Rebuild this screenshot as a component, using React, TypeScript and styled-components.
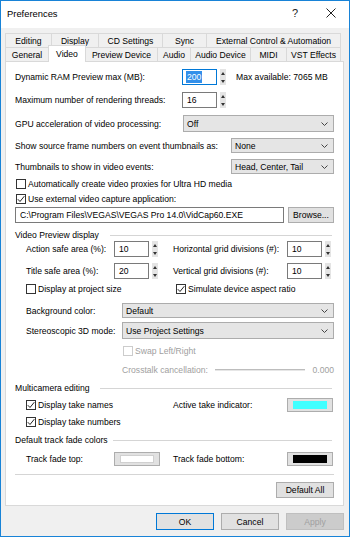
import React from 'react';
import styled, { createGlobalStyle } from 'styled-components';

const GlobalStyle = createGlobalStyle`
  html, body {
    margin: 0;
    padding: 0;
    background: #fff;
  }

  body {
    font-family: "Liberation Sans", Arial, sans-serif;
    font-size: 8.6px;
    color: #000;
  }

  * {
    box-sizing: border-box;
  }
`;

const Window = styled.div`
  width: 350px;
  height: 537px;
  border: 1px solid #1883d7;
  background: #f0f0f0;
  display: flex;
  flex-direction: column;
  overflow: hidden;
`;

const TitleBar = styled.div`
  height: 27px;
  flex-shrink: 0;
  display: flex;
  align-items: center;
  padding: 0 0 3px 6px;
  background: #fff;
  font-size: 9.4px;
`;

const TitleButton = styled.div`
  width: 36px;
  height: 100%;
  display: flex;
  align-items: center;
  justify-content: center;
  font-size: 11px;
  color: #222;

  &:first-of-type {
    margin-left: auto;
  }
`;

const TabArea = styled.div`
  flex-shrink: 0;
  padding: 5px 0 0 4px;
`;

const TabRow = styled.div`
  display: flex;
  height: 14px;
`;

const Tab = styled.div<{ $w: number; $active?: boolean }>`
  width: ${(p) => p.$w}px;
  flex-shrink: 0;
  display: flex;
  align-items: center;
  justify-content: center;
  white-space: nowrap;
  border: 1px solid #d9d9d9;
  border-bottom: none;
  border-right: none;
  background: ${(p) => (p.$active ? '#fff' : '#f0f0f0')};

  &:last-child {
    border-right: 1px solid #d9d9d9;
  }

  ${(p) =>
    p.$active &&
    `
    position: relative;
    z-index: 1;
    height: 17px;
    margin-top: -2px;
    border-right: 1px solid #d9d9d9;
    & + div { border-left: none; }
  `}
`;

const Panel = styled.div`
  flex-shrink: 0;
  height: 445px;
  margin: 0 5px 0 4px;
  padding: 0 9px;
  background: #fff;
  border: 1px solid #d9d9d9;
  display: flex;
  flex-direction: column;
`;

const Row = styled.div<{ $mt: number; $h: number; $indent?: number }>`
  flex-shrink: 0;
  display: flex;
  align-items: center;
  height: ${(p) => p.$h}px;
  margin-top: ${(p) => p.$mt}px;
  padding-left: ${(p) => p.$indent ?? 0}px;
  white-space: nowrap;
`;

const Col = styled.div<{ $w?: number; $pl?: number }>`
  display: flex;
  align-items: center;
  height: 100%;
  ${(p) => (p.$w ? `width: ${p.$w}px; flex-shrink: 0;` : 'flex: 1;')}
  padding-left: ${(p) => p.$pl ?? 0}px;
`;

const Label = styled.span<{ $w?: number; $disabled?: boolean; $ml?: number }>`
  flex-shrink: 0;
  width: ${(p) => (p.$w ? `${p.$w}px` : 'auto')};
  margin-left: ${(p) => p.$ml ?? 0}px;
  color: ${(p) => (p.$disabled ? '#a0a0a0' : '#000')};
`;

const TextBox = styled.div<{ $w?: number; $focused?: boolean }>`
  ${(p) => (p.$w ? `width: ${p.$w}px; flex-shrink: 0;` : 'flex: 1;')}
  height: 100%;
  display: flex;
  align-items: center;
  padding-left: 4px;
  background: #fff;
  border: 1px solid ${(p) => (p.$focused ? '#0078d7' : '#7a7a7a')};
`;

const Selection = styled.span`
  background: #3390ea;
  color: #fff;
  padding: 1px 1px;
  margin-left: -1px;
`;

const Spinner = styled.div`
  width: 6px;
  height: 100%;
  margin-left: 3px;
  display: flex;
  flex-direction: column;
  justify-content: space-around;
  align-items: center;
  background: #e4e4e4;
`;

const Arrow = styled.div<{ $down?: boolean }>`
  width: 0;
  height: 0;
  border-left: 2.5px solid transparent;
  border-right: 2.5px solid transparent;
  ${(p) => (p.$down ? 'border-top' : 'border-bottom')}: 3px solid #333;
`;

const Select = styled.div<{ $w?: number }>`
  ${(p) => (p.$w ? `width: ${p.$w}px; flex-shrink: 0;` : 'flex: 1;')}
  height: 100%;
  display: flex;
  align-items: center;
  justify-content: space-between;
  padding: 0 5px 0 3px;
  background: #e5e5e5;
  border: 1px solid #acacac;
`;

const Box = styled.span<{ $disabled?: boolean }>`
  width: 10px;
  height: 10px;
  flex-shrink: 0;
  margin-right: 2px;
  display: flex;
  align-items: center;
  justify-content: center;
  background: #fff;
  border: 1px solid ${(p) => (p.$disabled ? '#cccccc' : '#333')};
`;

const GroupHeader = styled.div<{ $mt: number; $textW: number }>`
  flex-shrink: 0;
  display: flex;
  align-items: center;
  height: 12px;
  margin-top: ${(p) => p.$mt}px;
  white-space: nowrap;

  & > span {
    width: ${(p) => p.$textW}px;
  }

  &::after {
    content: '';
    flex: 1;
    height: 1px;
    margin-right: 2px;
    background: #d5d5d5;
  }
`;

const Swatch = styled.div`
  width: 46px;
  height: 100%;
  flex-shrink: 0;
  display: flex;
  padding: 2px 5px;
  background: #e1e1e1;
  border: 1px solid #adadad;
`;

const SwatchColor = styled.div<{ $color: string }>`
  flex: 1;
  background: ${(p) => p.$color};
  border: 1px solid ${(p) => (p.$color === '#ffffff' ? '#d0d0d0' : p.$color)};
`;

const SliderTrack = styled.div`
  width: 90px;
  height: 2px;
  flex-shrink: 0;
  background: #bdbdbd;
  border-bottom: 1px solid #e6e6e6;
`;

const Separator = styled.div`
  flex-shrink: 0;
  height: 1px;
  margin-top: 8px;
  background: #d5d5d5;
`;

const Button = styled.button<{ $w?: number; $primary?: boolean }>`
  width: ${(p) => p.$w ?? 58}px;
  height: 100%;
  padding: 0;
  font: inherit;
  color: #000;
  background: #e1e1e1;
  border: 1px solid ${(p) => (p.$primary ? '#0078d7' : '#adadad')};

  &:disabled {
    color: #a0a0a0;
    background: #cccccc;
    border-color: #bfbfbf;
  }
`;

const Footer = styled.div`
  flex-shrink: 0;
  height: 24px;
  display: flex;
  justify-content: flex-end;
  gap: 7px;
  padding: 7px 5px 0 0;
`;

const ButtonRow = styled.div`
  display: flex;
  height: 17px;
  gap: 7px;
`;

const Chevron = () => (
  <svg width="7" height="4" viewBox="0 0 7 4">
    <polyline points="0.5,0.5 3.5,3.5 6.5,0.5" fill="none" stroke="#444" strokeWidth="1" />
  </svg>
);

const Check = () => (
  <svg width="8" height="8" viewBox="0 0 8 8">
    <polyline points="0.8,4.2 3,6.5 7.3,1.2" fill="none" stroke="#222" strokeWidth="1" />
  </svg>
);

type CheckProps = { label: string; checked?: boolean; disabled?: boolean };

const CheckBox: React.FC<CheckProps> = ({ label, checked, disabled }: CheckProps) => (
  <>
    <Box $disabled={disabled}>{checked && <Check />}</Box>
    <Label $disabled={disabled}>{label}</Label>
  </>
);

type SpinProps = { value: React.ReactNode; focused?: boolean };

const SpinBox: React.FC<SpinProps> = ({ value, focused }: SpinProps) => (
  <>
    <TextBox $w={35} $focused={focused}>{value}</TextBox>
    <Spinner>
      <Arrow />
      <Arrow $down />
    </Spinner>
  </>
);

const tabsBack = [
  { name: 'Editing', w: 46 },
  { name: 'Display', w: 47 },
  { name: 'CD Settings', w: 64 },
  { name: 'Sync', w: 44 },
  { name: 'External Control & Automation', w: 135 },
];

const tabsFront = [
  { name: 'General', w: 43 },
  { name: 'Video', w: 38 },
  { name: 'Preview Device', w: 71 },
  { name: 'Audio', w: 33 },
  { name: 'Audio Device', w: 60 },
  { name: 'MIDI', w: 36 },
  { name: 'VST Effects', w: 55 },
];

const App: React.FC = () => (
  <>
    <GlobalStyle />
    <Window>
      <TitleBar>
        Preferences
        <TitleButton>?</TitleButton>
        <TitleButton>
          <svg width="10" height="10" viewBox="0 0 10 10">
            <path d="M0.5 0.5 L9.5 9.5 M9.5 0.5 L0.5 9.5" stroke="#222" strokeWidth="1" />
          </svg>
        </TitleButton>
      </TitleBar>

      <TabArea>
        <TabRow>
          {tabsBack.map((t) => (
            <Tab key={t.name} $w={t.w}>{t.name}</Tab>
          ))}
        </TabRow>
        <TabRow>
          {tabsFront.map((t) => (
            <Tab key={t.name} $w={t.w} $active={t.name === 'Video'}>{t.name}</Tab>
          ))}
        </TabRow>
      </TabArea>

      <Panel>
        <Row $mt={7} $h={16}>
          <Label $w={167}>Dynamic RAM Preview max (MB):</Label>
          <SpinBox focused value={<Selection>200</Selection>} />
          <Label $ml={10}>Max available: 7065 MB</Label>
        </Row>
        <Row $mt={7} $h={16}>
          <Label $w={167}>Maximum number of rendering threads:</Label>
          <SpinBox value="16" />
        </Row>
        <Row $mt={7} $h={17}>
          <Label $w={168}>GPU acceleration of video processing:</Label>
          <Select>Off<Chevron /></Select>
        </Row>
        <Row $mt={6} $h={15}>
          <Label $w={216}>Show source frame numbers on event thumbnails as:</Label>
          <Select>None<Chevron /></Select>
        </Row>
        <Row $mt={6} $h={15}>
          <Label $w={216}>Thumbnails to show in video events:</Label>
          <Select>Head, Center, Tail<Chevron /></Select>
        </Row>
        <Row $mt={5} $h={10} $indent={1}>
          <CheckBox label="Automatically create video proxies for Ultra HD media" />
        </Row>
        <Row $mt={5} $h={10} $indent={1}>
          <CheckBox checked label="Use external video capture application:" />
        </Row>
        <Row $mt={3} $h={16}>
          <TextBox>C:\Program Files\VEGAS\VEGAS Pro 14.0\VidCap60.EXE</TextBox>
          <Button type="button" $w={46} style={{ marginLeft: 4 }}>Browse...</Button>
        </Row>

        <GroupHeader $mt={6} $textW={95}><span>Video Preview display</span></GroupHeader>
        <Row $mt={0} $h={16} $indent={11}>
          <Col $w={147}>
            <Label $w={88}>Action safe area (%):</Label>
            <SpinBox value="10" />
          </Col>
          <Col>
            <Label $w={114}>Horizontal grid divisions (#):</Label>
            <SpinBox value="10" />
          </Col>
        </Row>
        <Row $mt={6} $h={16} $indent={11}>
          <Col $w={147}>
            <Label $w={88}>Title safe area (%):</Label>
            <SpinBox value="20" />
          </Col>
          <Col>
            <Label $w={114}>Vertical grid divisions (#):</Label>
            <SpinBox value="10" />
          </Col>
        </Row>
        <Row $mt={4} $h={12} $indent={11}>
          <Col $w={147}>
            <CheckBox label="Display at project size" />
          </Col>
          <Col $pl={3}>
            <CheckBox checked label="Simulate device aspect ratio" />
          </Col>
        </Row>
        <Row $mt={8} $h={15} $indent={11}>
          <Label $w={96}>Background color:</Label>
          <Select>Default<Chevron /></Select>
        </Row>
        <Row $mt={4} $h={17} $indent={11}>
          <Label $w={96}>Stereoscopic 3D mode:</Label>
          <Select>Use Project Settings<Chevron /></Select>
        </Row>
        <Row $mt={7} $h={10} $indent={108}>
          <CheckBox disabled label="Swap Left/Right" />
        </Row>
        <Row $mt={8} $h={12} $indent={107}>
          <Label $w={93} $disabled>Crosstalk cancellation:</Label>
          <SliderTrack />
          <Label $disabled style={{ marginLeft: 'auto' }}>0.000</Label>
        </Row>

        <GroupHeader $mt={6} $textW={85}><span>Multicamera editing</span></GroupHeader>
        <Row $mt={4} $h={14} $indent={11}>
          <Col $w={147}>
            <CheckBox checked label="Display take names" />
          </Col>
          <Col>
            <Label $w={114}>Active take indicator:</Label>
            <Swatch><SwatchColor $color="#40ffff" /></Swatch>
          </Col>
        </Row>
        <Row $mt={4} $h={12} $indent={11}>
          <CheckBox checked label="Display take numbers" />
        </Row>

        <GroupHeader $mt={6} $textW={98}><span>Default track fade colors</span></GroupHeader>
        <Row $mt={6} $h={14} $indent={11}>
          <Col $w={147}>
            <Label $w={88}>Track fade top:</Label>
            <Swatch><SwatchColor $color="#ffffff" /></Swatch>
          </Col>
          <Col>
            <Label $w={114}>Track fade bottom:</Label>
            <Swatch><SwatchColor $color="#000000" /></Swatch>
          </Col>
        </Row>

        <Separator />
        <Row $mt={7} $h={16} style={{ justifyContent: 'flex-end' }}>
          <Button type="button">Default All</Button>
        </Row>
      </Panel>

      <Footer>
        <ButtonRow>
          <Button type="button" $primary>OK</Button>
          <Button type="button">Cancel</Button>
          <Button type="button" disabled>Apply</Button>
        </ButtonRow>
      </Footer>
    </Window>
  </>
);

export default App;
